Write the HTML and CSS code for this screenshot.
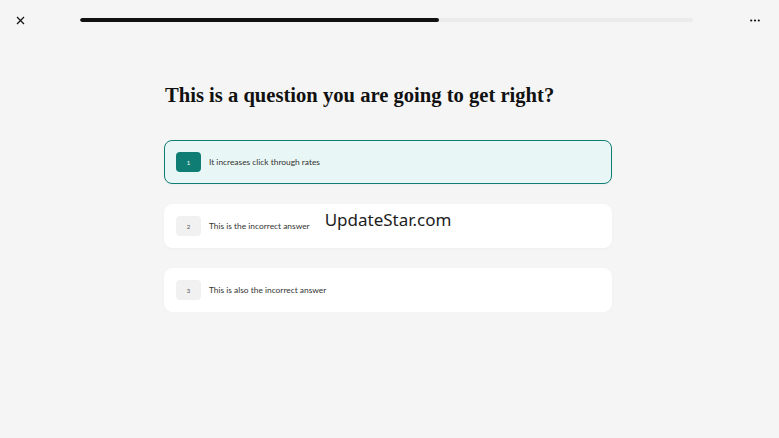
FILE: index.html
```html
<!DOCTYPE html>
<html lang="en">
<head>
    <meta charset="UTF-8">
    <meta name="viewport" content="width=device-width, initial-scale=1.0">
    <title>Quiz</title>
    <link rel="stylesheet" href="styles.css">
</head>
<body>
    <header class="topbar">
        <button class="icon-btn close" aria-label="Close">
            <svg width="9" height="9" viewBox="0 0 9 9"><path d="M1 1 L8 8 M8 1 L1 8" stroke="#111" stroke-width="1.2" fill="none"/></svg>
        </button>
        <div class="progress"><div class="progress-fill" style="width: 58.5%"></div></div>
        <button class="icon-btn more" aria-label="More">
            <svg width="10" height="3" viewBox="0 0 10 3"><circle cx="1.2" cy="1.5" r="1.1" fill="#111"/><circle cx="5" cy="1.5" r="1.1" fill="#111"/><circle cx="8.8" cy="1.5" r="1.1" fill="#111"/></svg>
        </button>
    </header>

    <main class="quiz">
        <h1>This is a question you are going to get right?</h1>

        <div class="options">
            <div class="option selected">
                <span class="key">1</span>
                <span class="label">It increases click through rates</span>
            </div>
            <div class="option">
                <span class="key">2</span>
                <span class="label">This is the incorrect answer</span>
                <span class="watermark">UpdateStar.com</span>
            </div>
            <div class="option">
                <span class="key">3</span>
                <span class="label">This is also the incorrect answer</span>
            </div>
        </div>
    </main>
</body>
</html>
```

FILE: styles.css
```css
body {
    margin: 0;
    background-color: #f5f5f5;
    font-family: "Lato", "Noto Sans", sans-serif;
    color: #222;
}
.topbar {
    display: flex;
    align-items: center;
    height: 40px;
    padding: 0 16px 0 15px;
}
.icon-btn {
    background: none;
    border: none;
    padding: 0;
    width: 11px;
    height: 11px;
    display: flex;
    align-items: center;
    justify-content: center;
    cursor: pointer;
}
.progress {
    flex: none;
    width: 613px;
    height: 4px;
    margin-left: 54px;
    margin-right: 56px;
    background-color: #ebebeb;
    border-radius: 2px;
    overflow: hidden;
}
.progress-fill {
    height: 100%;
    background-color: #111;
    border-radius: 2px;
}
.quiz {
    width: 448px;
    margin: 0 0 0 164px;
    padding-top: 44px;
}
h1 {
    font-family: "Liberation Serif", serif;
    font-size: 20.6px;
    font-weight: bold;
    color: #111;
    margin: 0 0 33px 1px;
}
.options {
    display: flex;
    flex-direction: column;
    gap: 20px;
}
.option {
    display: flex;
    align-items: center;
    height: 44px;
    padding: 0 11px;
    background-color: #fff;
    border: 1px solid #fff;
    border-radius: 8px;
    box-sizing: border-box;
    box-shadow: 0 1px 3px rgba(0,0,0,0.03);
}
.option.selected {
    background-color: #e8f6f5;
    border-color: #0f7d73;
}
.key {
    width: 25px;
    height: 20px;
    border-radius: 4px;
    background-color: #f1f1f1;
    color: #555;
    font-size: 6px;
    display: flex;
    align-items: center;
    justify-content: center;
    margin-right: 8px;
}
.selected .key {
    background-color: #0f7d73;
    color: #fff;
}
.label {
    font-size: 8.4px;
    color: #333;
}
.watermark {
    font-family: "Noto Sans", sans-serif;
    font-size: 17px;
    color: #1d1d1d;
    margin-left: 15px;
    margin-top: -14px;
}
```
